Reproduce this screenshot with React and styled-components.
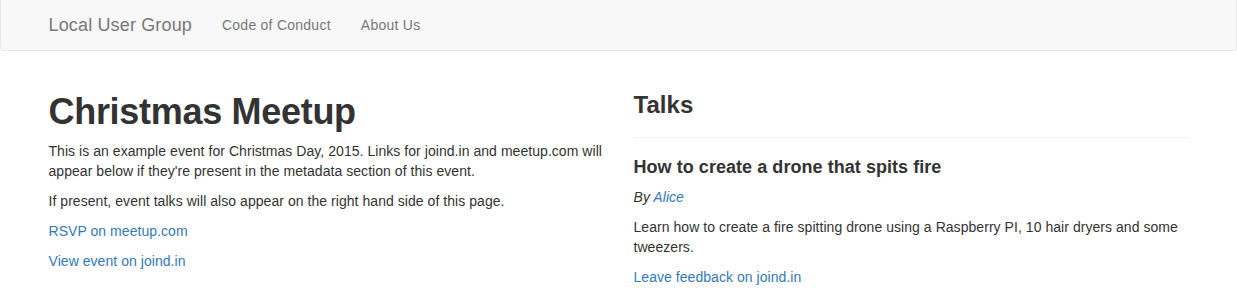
import styled, { createGlobalStyle } from 'styled-components';

const GlobalStyle = createGlobalStyle`
  * {
    box-sizing: border-box;
  }

  body {
    margin: 0;
    font-family: "Liberation Sans", Arial, sans-serif;
    font-size: 14px;
    line-height: 1.42857;
    letter-spacing: 0.05px;
    color: #333;
    background: #fff;
  }

  a {
    color: #337ab7;
    text-decoration: none;
  }
`;

const Navbar = styled.nav`
  height: 51px;
  background-color: #f8f8f8;
  border: 1px solid #e7e7e7;
  border-top: none;
  border-radius: 0 0 4px 4px;
`;

const Container = styled.div`
  width: 1170px;
  margin: 0 auto;
  padding: 0 15px;
`;

const NavInner = styled(Container)`
  display: flex;
  align-items: center;
  height: 50px;
`;

const Brand = styled.a`
  color: #777;
  font-size: 18px;
  line-height: 20px;
  letter-spacing: 0.15px;
  padding: 15px 15px;
  margin-left: -15px;
`;

const NavLinks = styled.ul`
  display: flex;
  list-style: none;
  margin: 0;
  padding: 0;
`;

const NavLink = styled.a`
  display: block;
  color: #777;
  line-height: 20px;
  letter-spacing: 0.25px;
  padding: 15px;
`;

const Row = styled(Container)`
  display: grid;
  grid-template-columns: 1fr 1fr;
  column-gap: 30px;
  padding-top: 41px;
`;

const Column = styled.div`
  min-width: 0;
`;

const Title = styled.h1`
  font-size: 36px;
  font-weight: 700;
  line-height: 1.1;
  margin: 0 0 10px;
  letter-spacing: -0.3px;
`;

const Text = styled.p`
  margin: 0 0 10px;
  font-style: ${({ $italic }) => ($italic ? 'italic' : 'normal')};
`;

const PageHeader = styled.div`
  padding-bottom: 9px;
  margin-bottom: 20px;
  border-bottom: 1px solid #eee;
`;

const SectionTitle = styled.h3`
  font-size: 24px;
  font-weight: 700;
  line-height: 1.1;
  margin: 0 0 10px;
`;

const TalkTitle = styled.h4`
  font-size: 18px;
  font-weight: 700;
  line-height: 1.1;
  margin: 0 0 10px;
`;

const talks = [
  {
    title: 'How to create a drone that spits fire',
    speaker: 'Alice',
    abstract:
      'Learn how to create a fire spitting drone using a Raspberry PI, 10 hair dryers and some tweezers.',
  },
];

const App = () => {
  return (
    <>
      <GlobalStyle />
      <Navbar>
        <NavInner>
          <Brand href="#">Local User Group</Brand>
          <NavLinks>
            <li>
              <NavLink href="#">Code of Conduct</NavLink>
            </li>
            <li>
              <NavLink href="#">About Us</NavLink>
            </li>
          </NavLinks>
        </NavInner>
      </Navbar>
      <Row>
        <Column>
          <Title>Christmas Meetup</Title>
          <Text>
            This is an example event for Christmas Day, 2015. Links for joind.in and meetup.com
            will appear below if they're present in the metadata section of this event.
          </Text>
          <Text>If present, event talks will also appear on the right hand side of this page.</Text>
          <Text>
            <a href="#">RSVP on meetup.com</a>
          </Text>
          <Text>
            <a href="#">View event on joind.in</a>
          </Text>
        </Column>
        <Column>
          <PageHeader>
            <SectionTitle>Talks</SectionTitle>
          </PageHeader>
          {talks.map((talk) => (
            <div key={talk.title}>
              <TalkTitle>{talk.title}</TalkTitle>
              <Text $italic>
                By <a href="#">{talk.speaker}</a>
              </Text>
              <Text>{talk.abstract}</Text>
              <Text>
                <a href="#">Leave feedback on joind.in</a>
              </Text>
            </div>
          ))}
        </Column>
      </Row>
    </>
  );
};

export default App;
